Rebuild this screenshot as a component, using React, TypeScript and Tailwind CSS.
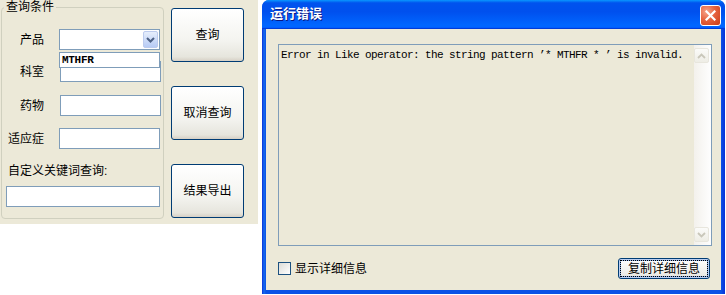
const cjk = "font-['Liberation_Sans','Noto_Sans_CJK_SC',sans-serif]";

function XpButton({ label }: { label: string }) {
  return (
    <button
      type="button"
      className="w-[73px] h-[54px] rounded-[3px] border border-[#003c74] bg-[linear-gradient(180deg,#ffffff_0%,#f4f4f0_60%,#e6e5dd_92%,#d6d0c5_100%)] text-[12px] text-black"
    >
      {label}
    </button>
  );
}

function TextBox({ className }: { className: string }) {
  return <div className={"h-[21px] border border-[#7f9db9] bg-white " + className} />;
}

function LeftPanel() {
  return (
    <div className={"flex h-[224px] w-[258px] shrink-0 bg-[#ece9d8] text-[12px] text-black " + cjk}>
      <fieldset className="ml-[1px] h-[219px] w-[163px] rounded-[4px] border border-[#d0d0bf]">
        <legend className="ml-[2px] px-[2px] leading-[14px]">查询条件</legend>
        <div className="flex flex-col">
          <div className="mt-[15px] flex h-[21px] items-center">
            <span className="w-[42px] text-right">产品</span>
            <div className="relative ml-[15px] w-[101px]">
              <div className="flex h-[21px] items-center justify-end border border-[#7f9db9] bg-white pr-[1px]">
                <div className="flex h-[17px] w-[15px] items-center justify-center rounded-[2px] border border-[#bccbee] bg-[linear-gradient(180deg,#e6eefc,#b7cbf5)]">
                  <svg width="9" height="6" viewBox="0 0 9 6">
                    <path d="M1 1 L4.5 4.5 L8 1" fill="none" stroke="#4d6185" strokeWidth="2" />
                  </svg>
                </div>
              </div>
              <div className="absolute left-0 top-[23px] z-10 flex h-[16px] w-[101px] items-center border border-[#7f9db9] bg-white pl-[2px] font-['Liberation_Mono',monospace] text-[11px] font-bold tracking-[-0.3px]">
                MTHFR
              </div>
            </div>
          </div>
          <div className="mt-[11px] flex h-[21px] items-center">
            <span className="w-[42px] text-right">科室</span>
            <TextBox className="ml-[16px] w-[101px]" />
          </div>
          <div className="mt-[13px] flex h-[21px] items-center">
            <span className="w-[42px] text-right">药物</span>
            <TextBox className="ml-[16px] w-[101px]" />
          </div>
          <div className="mt-[12px] flex h-[21px] items-center">
            <span className="w-[42px] text-right">适应症</span>
            <TextBox className="ml-[15px] w-[101px]" />
          </div>
          <div className="mt-[15px] h-[14px] pl-[6px] leading-[14px]">自定义关键词查询:</div>
          <TextBox className="ml-[4px] mt-[8px] w-[154px]" />
        </div>
      </fieldset>
      <div className="ml-[7px] flex flex-col gap-[24px] pt-[8px]">
        <XpButton label="查询" />
        <XpButton label="取消查询" />
        <XpButton label="结果导出" />
      </div>
    </div>
  );
}

function ScrollArrow({ up }: { up: boolean }) {
  return (
    <div className="flex h-[15px] w-[15px] items-center justify-center rounded-[2px] border border-[#e8e6dd] bg-[linear-gradient(180deg,#fbfbf9,#eeede5)]">
      <svg width="9" height="6" viewBox="0 0 9 6">
        <path d={up ? "M1 5 L4.5 1.5 L8 5" : "M1 1 L4.5 4.5 L8 1"} fill="none" stroke="#c9c7ba" strokeWidth="1.8" />
      </svg>
    </div>
  );
}

function ErrorDialog() {
  return (
    <div className={"ml-[4px] flex h-[294px] w-[463px] shrink-0 flex-col rounded-t-[7px] bg-[linear-gradient(90deg,#0831d9_0px,#166aee_2px,#0a52e6_4px,#0a52e6_calc(100%-4px),#0831d9_100%)] " + cjk}>
      <div className="flex h-[29px] items-start justify-between rounded-t-[7px] bg-[linear-gradient(180deg,#0997ff_0%,#0053ee_10%,#0050ee_40%,#0066ff_86%,#0066ff_92%,#005bff_95%,#003dd7_97%,#003dd7_100%)]">
        <span className="pl-[8px] pt-[6px] text-[13px] font-bold leading-[16px] text-white [text-shadow:1px_1px_0_#0a1883]">
          运行错误
        </span>
        <div className="mr-[4px] mt-[5px] flex h-[21px] w-[21px] items-center justify-center rounded-[3px] border border-white bg-[radial-gradient(circle_at_30%_30%,#f6a48a_0%,#e6633f_45%,#cc3b15_100%)]">
          <svg width="11" height="11" viewBox="0 0 11 11">
            <path d="M1.5 1.5 L9.5 9.5 M9.5 1.5 L1.5 9.5" stroke="white" strokeWidth="2.2" strokeLinecap="square" />
          </svg>
        </div>
      </div>
      <div className="mx-[4px] mb-[4px] flex flex-1 flex-col bg-[#ece9d8] pl-[12px] pt-[15px]">
        <div className="flex h-[202px] w-[434px] border border-[#7f9db9]">
          <div className="flex-1 pl-[2px] pt-[3px] font-['Liberation_Mono',monospace] text-[11px] leading-[14px] tracking-[-0.6px] text-black">
            Error in Like operator: the string pattern &rsquo;* MTHFR * &rsquo; is invalid.
          </div>
          <div className="flex w-[17px] flex-col justify-between bg-[linear-gradient(90deg,#f3f1ec,#fefefe)] py-[3px]">
            <ScrollArrow up />
            <ScrollArrow up={false} />
          </div>
        </div>
        <div className="mt-[12px] flex h-[21px] w-[434px] items-center justify-between pr-[2px]">
          <div className="flex items-center">
            <div className="h-[13px] w-[13px] border border-[#1c5180] bg-[linear-gradient(135deg,#dcdcd7,#ffffff)]" />
            <span className="ml-[4px] text-[12px] text-black">显示详细信息</span>
          </div>
          <button
            type="button"
            className="flex h-[21px] w-[92px] items-center justify-center rounded-[3px] border border-[#003c74] bg-[linear-gradient(180deg,#ffffff,#ecebe6_85%,#d6d0c5)] p-[1px] shadow-[inset_0_0_0_1px_#bbcef1,inset_0_0_0_2px_#89ade4]"
          >
            <span className="flex h-full w-full items-center justify-center border border-dotted border-black text-[12px] leading-none text-black">
              复制详细信息
            </span>
          </button>
        </div>
      </div>
    </div>
  );
}

export default function App() {
  return (
    <div className="flex h-[295px] w-[726px] items-start overflow-hidden bg-white">
      <LeftPanel />
      <ErrorDialog />
    </div>
  );
}
